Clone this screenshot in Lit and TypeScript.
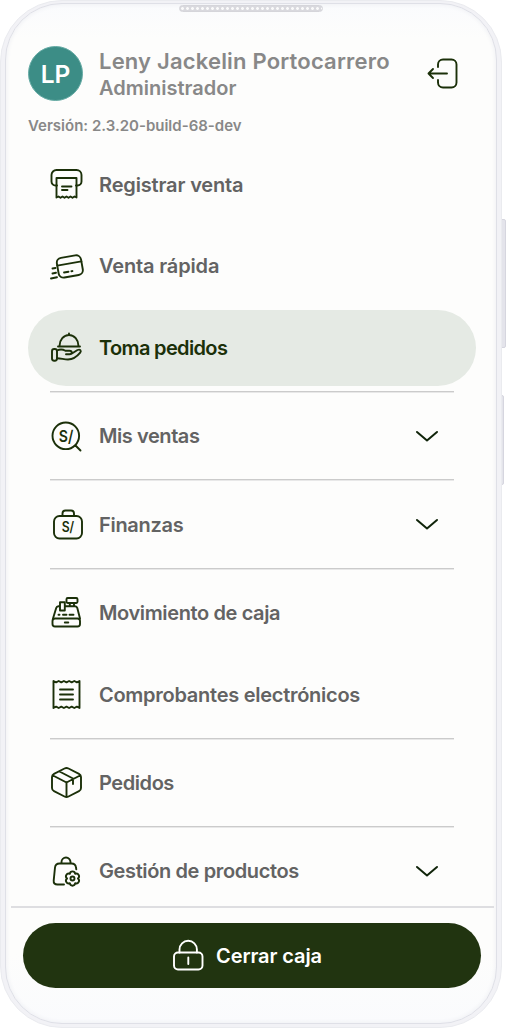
import { LitElement, html, css, svg, nothing } from "lit";
import { customElement, property } from "lit/decorators.js";
import { styleMap } from "lit/directives/style-map.js";

const icons: Record<string, unknown> = {
  printer: svg`<path d="M7 17.500H5.5a4 4 0 0 1-4-4V7a5 5 0 0 1 5-5H26.500a5 5 0 0 1 5 5v6.500a4 4 0 0 1-4 4H26"/><path d="M6.500 10H26.500V29.500l-2-1-2 1.300-2-1.300-2 1.300-2-1.300-2 1.300-2-1.300-2 1.300-2-1.300-2 1ZM12 18.500H21.500M12 22H17.500"/>`,
  card: svg`<g transform="rotate(-10 19.500 16)"><rect x="7.500" y="6.500" width="24.500" height="20" rx="5"/><path d="M7.500 13.500H32M13 21.500h4.500M20.500 21.500h1"/></g><path d="M2.500 18.500l3-.5M2.500 23.500l3.500-.7M1 28.500l6-1.200"/>`,
  serve: svg`<path d="M8 15.500H30M9.500 15A9.500 11 0 0 1 28.500 15M19 3.800V2.500"/><rect x="2" y="18" width="5" height="11.800" rx="2.200"/><path d="M7 19.500c4.500-2 6.500-.8 8.500.3h4c3 0 3 3.500 0 3.500H16M21.500 22.800l6-3.800c2.500-1.200 4.200.7 2.700 2.700-3.500 4.300-7.200 6.800-12.200 6.800-4 0-7-1.200-11-1.200"/>`,
  search: svg`<circle cx="15.800" cy="15.800" r="13.300"/><path d="M25.500 25.500l5 5"/><text x="8.800" y="21.800" font-size="16.500" textLength="14.500" lengthAdjust="spacingAndGlyphs">S/</text>`,
  bag: svg`<rect x="4" y="8" width="28" height="22.500" rx="5.500"/><path d="M12.500 8V5.500a3 3 0 0 1 3-3h5.500a3 3 0 0 1 3 3V8"/><text x="11.700" y="24.300" font-size="14" textLength="12.500" lengthAdjust="spacingAndGlyphs">S/</text>`,
  register: svg`<path d="M10 10.300H8.500a2.500 2.500 0 0 0-2.300 1.800L3 22.500M14.800 10.300H25a2.500 2.500 0 0 1 2.300 1.800L30 22.500M10 14.500V6.200h4.800v8.300ZM19.800 10V7M24 10V7"/><rect x="16.500" y="2" width="11" height="5" rx="1.200"/><rect x="2.500" y="22.500" width="27.500" height="8" rx="2.500"/><path d="M8.500 18.800h1M13 18.800h3.500M19.500 18.800h4M14.800 26.500h3.500"/>`,
  receipt: svg`<path d="M3.500 3l2.600 1.300 2.600-1.300 2.600 1.300 2.600-1.300 2.600 1.300 2.600-1.300 2.600 1.300 2.600-1.300 2.600 1.300 2.600-1.300V30l-2.600-1.300-2.600 1.300-2.600-1.300-2.600 1.300-2.600-1.300-2.600 1.300-2.600-1.300-2.600 1.300-2.600-1.300L3.500 30ZM10 11.500h13M10 16.500h13M10 21.500h13"/>`,
  box: svg`<path d="M14.500 2.500q2-1 4 0l10.500 5.300q2 1 2 3.200v11q0 2.200-2 3.200L18.500 30.500q-2 1-4 0L4 25.200Q2 24.200 2 22V11q0-2.200 2-3.200ZM3 9.500l13.500 7 13.500-7M16.500 16.500V30.500M9.500 5.500l13.500 7v5.500"/>`,
  gearbag: svg`<path d="M14 29.500H7.500q-4.200 0-3.800-4L5 12.500q.5-4 4.500-4H21.500q4 0 4.500 4l.3 1.800M11.500 8.500V7a4.500 4.500 0 0 1 9 0v1.500"/><path transform="translate(22.500 23.500)" d="M5.400 0C8 2.100 5.800 5.900 2.700 4.700C2.200 8-2.200 8-2.700 4.700C-5.800 5.900-8 2.100-5.400 0C-8-2.100-5.800-5.900-2.700-4.700C-2.200-8 2.200-8 2.700-4.700C5.800-5.900 8-2.100 5.400 0Z"/><circle cx="22.500" cy="23.500" r="2"/>`,
  lock: svg`<rect x="2" y="13.500" width="28.500" height="17" rx="4"/><path d="M7.500 13.500V10.500a8.700 8.700 0 0 1 17.400 0v3M16.300 18.500v6.500"/>`,
  exit: svg`<path d="M12 10V7.500a5 5 0 0 1 5-5h8.500a5 5 0 0 1 5 5v18a5 5 0 0 1-5 5H17a5 5 0 0 1-5-5V23M21 16.500H2.500M7 12l-4.500 4.500L7 21"/>`,
};

@customElement("line-icon")
class LineIcon extends LitElement {
  @property() name = "";
  static styles = css`
    :host { display: block; flex: none; width: 33px; height: 33px; }
    svg { display: block; width: 33px; height: 33px; fill: none; stroke: currentColor; stroke-width: 1.9; stroke-linecap: round; stroke-linejoin: round; overflow: visible; }
    text { fill: currentColor; stroke: none; font-family: Inter, sans-serif; font-weight: 600; }
  `;
  render() {
    return html`<svg viewBox="0 0 33 33">${icons[this.name]}</svg>`;
  }
}

interface Entry { icon: string; label: string; track: number; open?: boolean; active?: boolean; line?: boolean }

const entries: Entry[] = [
  { icon: "printer", label: "Registrar venta", track: -0.15 },
  { icon: "card", label: "Venta rápida", track: -0.15 },
  { icon: "serve", label: "Toma pedidos", track: -0.65, active: true, line: true },
  { icon: "search", label: "Mis ventas", track: -0.43, open: true, line: true },
  { icon: "bag", label: "Finanzas", track: -0.3, open: true, line: true },
  { icon: "register", label: "Movimiento de caja", track: -0.38 },
  { icon: "receipt", label: "Comprobantes electrónicos", track: -0.27, line: true },
  { icon: "box", label: "Pedidos", track: -0.43, line: true },
  { icon: "gearbag", label: "Gestión de productos", track: -0.38, open: true },
];

@customElement("app-root")
class AppRoot extends LitElement {
  static styles = css`
    :host { display: block; width: 506px; height: 1028px; position: relative; overflow: hidden; background: #fff; font-family: Inter, sans-serif; font-weight: 600; color: #636363; }
    * { box-sizing: border-box; }
    .side { position: absolute; right: 0; top: 219px; width: 6px; height: 129px; border-radius: 0 2px 2px 0; background: #e4e4eb; border: 1px solid #d6d6df; }
    .side.small { top: 395px; right: 2px; width: 4px; height: 90px; }
    .phone { position: relative; width: 502px; height: 1028px; padding: 2px 4px 3px; border-radius: 62px; background: #f2f2f6; border: 1px solid #eaebef; }
    .screen { display: flex; flex-direction: column; height: 100%; border-radius: 57px; overflow: hidden; background: linear-gradient(#fafbfd 0, #fdfdfc 35px, #fdfdfc 950px, #fafbfd 100%); border: 1px solid #dfe0e7; box-shadow: inset 0 0 5px #ebecf1; padding: 0 2px 0 5px; }
    .speaker { position: absolute; left: 178px; top: 4px; width: 144px; height: 7px; border-radius: 4px; border: 1px solid #d5d5da; background: radial-gradient(circle, #fafafa 1.2px, #d9d9de 1.6px) 0 0 / 5px 5px; }
    header { display: flex; align-items: center; height: 57px; margin-top: 41px; padding: 0 35px 0 17px; }
    .avatar { display: grid; place-items: center; width: 55px; height: 55px; border-radius: 50%; background: #3c8d86; border: 1px solid #65aaa4; color: #fff; font-size: 24.500px; }
    .who { flex: 1; padding: 2px 0 0 16px; color: #888; line-height: 27px; white-space: nowrap; }
    .name { font-size: 22px; letter-spacing: .19px; }
    .role { font-size: 20px; }
    header line-icon { color: #1b3009; }
    .version { padding: 13px 0 0 17px; font-size: 15px; line-height: 22px; color: #888; white-space: nowrap; }
    nav { display: flex; flex-direction: column; gap: 5.600px; flex: 1; min-height: 0; overflow: hidden; padding: 9.500px 18px 0 17px; }
    .item { flex: none; display: flex; align-items: center; height: 76px; padding: 0 37px 0 22px; border-radius: 38px; }
    .item line-icon { color: #1b3009; margin-right: 16px; }
    .label { flex: 1; font-size: 20px; white-space: nowrap; }
    .active { background: #e5eae4; color: #1b3009; }
    .line { flex: none; height: 2px; background: linear-gradient(#cbcbcb 50%, #e8e8e8 50%); margin: -.4px 22px; }
    .chev { width: 24px; height: 13px; fill: none; stroke: #10240a; stroke-width: 2; stroke-linecap: round; stroke-linejoin: round; }
    footer { height: 117px; border-top: 2px solid #dedee1; padding: 15px 12px 0; }
    .close { display: flex; align-items: center; justify-content: center; gap: 11px; width: 458px; height: 65px; border: 0; border-radius: 33px; padding: 0 10px 0 0; background: #213410; color: #fff; font: 600 20px Inter, sans-serif; letter-spacing: -.1px; white-space: nowrap; }
  `;

  render() {
    return html`
      <div class="side"></div>
      <div class="side small"></div>
      <div class="phone">
        <div class="speaker"></div>
        <div class="screen">
          <header>
            <div class="avatar">LP</div>
            <div class="who">
              <div class="name">Leny Jackelin Portocarrero</div>
              <div class="role">Administrador</div>
            </div>
            <line-icon name="exit"></line-icon>
          </header>
          <div class="version">Versión: 2.3.20-build-68-dev</div>
          <nav>
            ${entries.map((e) => html`
              <div class="item ${e.active ? "active" : ""}">
                <line-icon name=${e.icon}></line-icon>
                <span class="label" style=${styleMap({ letterSpacing: `${e.track}px` })}>${e.label}</span>
                ${e.open ? html`<svg class="chev" viewBox="0 0 24 13"><path d="M2 2l10 8.500L22 2"/></svg>` : nothing}
              </div>
              ${e.line ? html`<div class="line"></div>` : nothing}
            `)}
          </nav>
          <footer>
            <button class="close"><line-icon name="lock"></line-icon><span>Cerrar caja</span></button>
          </footer>
        </div>
      </div>
    `;
  }
}
